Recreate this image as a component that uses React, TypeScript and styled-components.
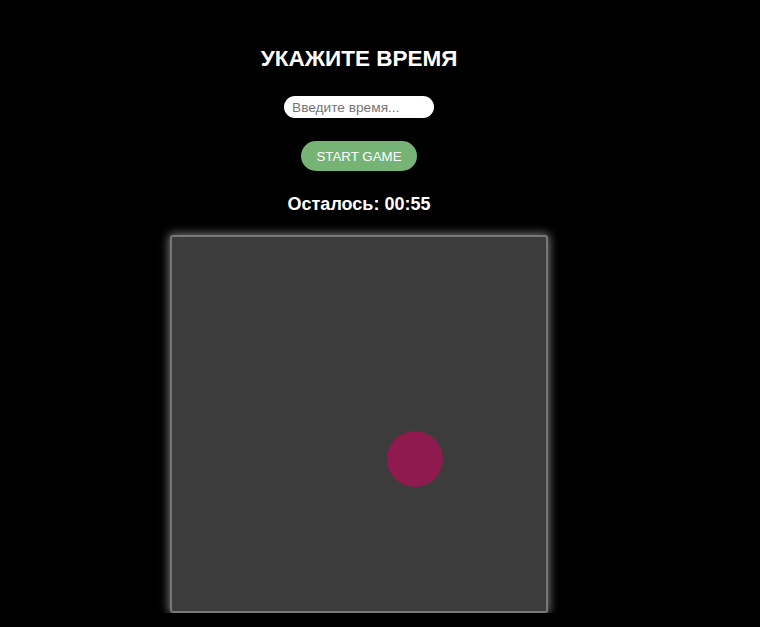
import React from "react";
import styled, { createGlobalStyle } from "styled-components";

const Global = createGlobalStyle`
  html, body { margin: 0; padding: 0; background: #000; }
  body { font-family: "Liberation Sans", Arial, sans-serif; color: #fff; }
`;

const Page = styled.div`
  width: 718px;
  display: flex;
  flex-direction: column;
  align-items: center;
  padding-top: 44px;
`;

const Title = styled.h1`
  margin: 0;
  font-size: 22.5px;
  font-weight: 700;
  line-height: 30px;
  color: #fff;
`;

const TimeInput = styled.input`
  margin-top: 22px;
  width: 150px;
  height: 22px;
  box-sizing: border-box;
  border: none;
  border-radius: 11px;
  background: #fff;
  padding: 0 8px;
  font-family: "Liberation Sans", Arial, sans-serif;
  font-size: 13.7px;
  color: #333;
  outline: none;
  &::placeholder { color: #757575; }
`;

const StartButton = styled.button`
  margin-top: 23px;
  width: 116px;
  height: 30px;
  border: none;
  border-radius: 15px;
  background: #75b475;
  color: #fff;
  font-family: "Liberation Sans", Arial, sans-serif;
  font-size: 13.333px;
  cursor: pointer;
`;

const Timer = styled.div`
  margin-top: 22px;
  font-size: 18px;
  font-weight: 700;
  line-height: 22px;
`;

const Board = styled.div`
  position: relative;
  margin-top: 20px;
  width: 374px;
  height: 374px;
  background: #3c3c3c;
  border: 2px solid #777;
  border-radius: 3px;
  box-shadow: 0 0 10px 1px rgba(255, 255, 255, 0.5);
`;

const Target = styled.div`
  position: absolute;
  width: 56px;
  height: 56px;
  border-radius: 50%;
  background: #8f1a4e;
`;

export default function App() {
  return (
    <>
      <Global />
      <Page>
        <Title>УКАЖИТЕ ВРЕМЯ</Title>
        <TimeInput placeholder="Введите время..." />
        <StartButton>START GAME</StartButton>
        <Timer>Осталось: 00:55</Timer>
        <Board>
          <Target style={{ left: 215, top: 194 }} />
        </Board>
      </Page>
    </>
  );
}
